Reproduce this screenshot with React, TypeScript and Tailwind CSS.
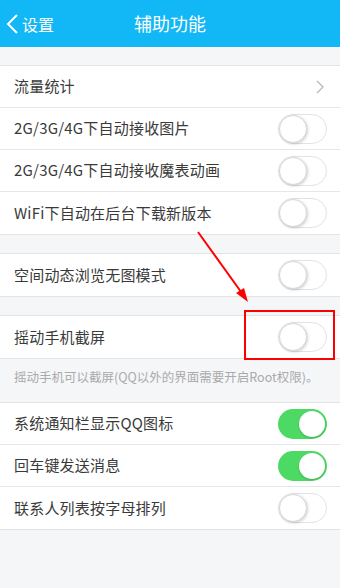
import React from "react";

const font = { fontFamily: '"Noto Sans CJK SC", "Noto Sans", sans-serif' };

function Switch({ on }: { on?: boolean }) {
  if (on) {
    return (
      <div className="relative h-[30px] w-[49px] rounded-full bg-[#4cd964]">
        <div className="absolute right-[2px] top-[2px] h-[26px] w-[26px] rounded-full bg-white shadow-[0_1px_2px_rgba(0,0,0,0.2)]" />
      </div>
    );
  }
  return (
    <div className="relative h-[30px] w-[49px] rounded-full border border-[#e3e3e3] bg-white">
      <div className="absolute left-0 top-0 h-[28px] w-[28px] rounded-full border border-[#d8d8d8] bg-white shadow-[1px_1px_3px_rgba(0,0,0,0.18)]" />
    </div>
  );
}

function Row({ label, on, chevron, last }: { label: string; on?: boolean; chevron?: boolean; last?: boolean }) {
  return (
    <div className={`flex h-[42px] items-center justify-between bg-white pl-[14px] pr-[13px] ${last ? "" : "border-b border-[#e6e6e6]"}`}>
      <span className="text-[15px] tracking-[0.2px] text-[#3a3a3a]">{label}</span>
      {chevron ? (
        <svg width="10" height="16" viewBox="0 0 10 16" className="mr-[2px]">
          <path d="M2 2 L8 8 L2 14" fill="none" stroke="#b8b8b8" strokeWidth="1.3" />
        </svg>
      ) : (
        <Switch on={on} />
      )}
    </div>
  );
}

function Group({ children }: { children: React.ReactNode }) {
  return <div className="border-y border-[#e3e3e3] bg-white">{children}</div>;
}

export default function App() {
  return (
    <div className="relative h-[588px] w-[340px] overflow-hidden bg-[#f5f6f8]" style={font}>
      <div className="relative flex h-[47px] items-center justify-center bg-[#12b7f5]">
        <div className="absolute left-[6px] top-0 flex h-full items-center gap-[3px] text-white">
          <svg width="13" height="22" viewBox="0 0 13 22">
            <path d="M11 2 L2 11 L11 20" fill="none" stroke="white" strokeWidth="2" />
          </svg>
          <span className="text-[16px]">设置</span>
        </div>
        <span className="text-[18px] text-white">辅助功能</span>
      </div>
      <div className="h-[18px] border-t border-[#fbfcfd]" />
      <Group>
        <Row label="流量统计" chevron />
        <Row label="2G/3G/4G下自动接收图片" />
        <Row label="2G/3G/4G下自动接收魔表动画" />
        <Row label="WiFi下自动在后台下载新版本" last />
      </Group>
      <div className="h-[18px]" />
      <Group>
        <Row label="空间动态浏览无图模式" last />
      </Group>
      <div className="h-[18px]" />
      <Group>
        <Row label="摇动手机截屏" last />
      </Group>
      <div className="h-[43px] pl-[14px] pt-[9px] text-[12.5px] text-[#aaaaaa]">
        摇动手机可以截屏(QQ以外的界面需要开启Root权限)。
      </div>
      <Group>
        <Row label="系统通知栏显示QQ图标" on />
        <Row label="回车键发送消息" on />
        <Row label="联系人列表按字母排列" last />
      </Group>

      <div className="absolute left-[244px] top-[310px] h-[50px] w-[91px] border-[2.5px] border-[#ff0000]" />
      <svg className="absolute left-0 top-0" width="340" height="588" viewBox="0 0 340 588">
        <line x1="198" y1="232" x2="244" y2="296" stroke="#ff0000" strokeWidth="2" />
        <polygon points="248,302 236,293 244,288" fill="#ff0000" />
      </svg>
    </div>
  );
}
